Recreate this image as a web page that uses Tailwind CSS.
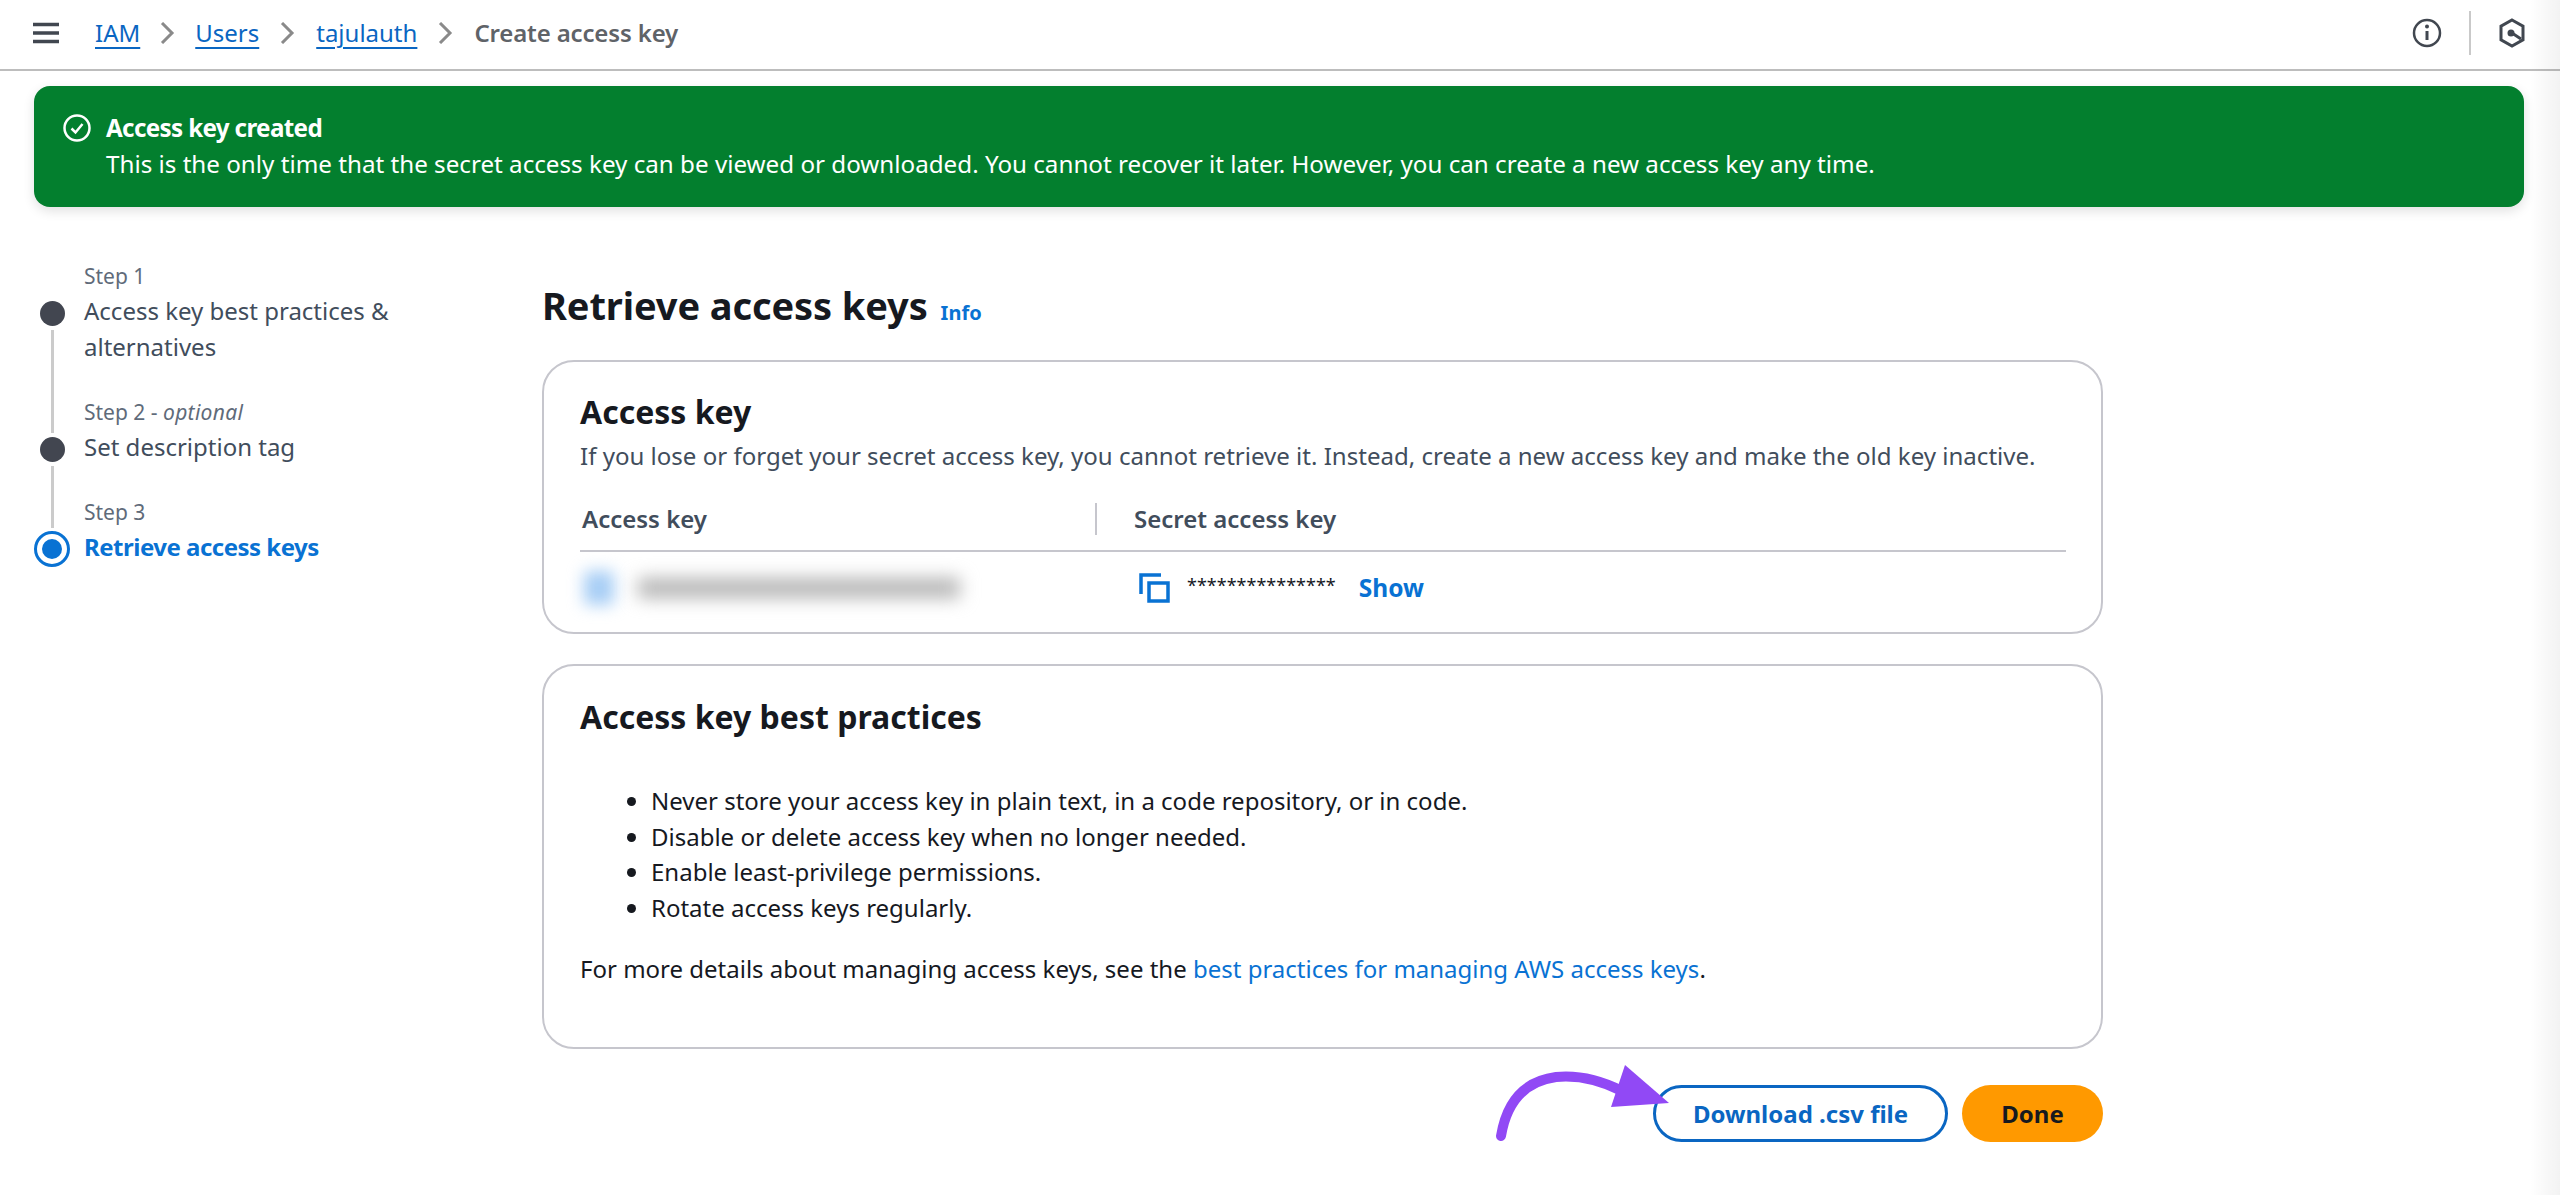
<!DOCTYPE html>
<html lang="en">
<head>
  <meta charset="UTF-8" />
  <title>Create access key</title>
  <script src="https://cdn.jsdelivr.net/npm/@tailwindcss/browser@4"></script>
</head>
<body class="relative h-[1195px] overflow-hidden bg-white font-['Noto_Sans',sans-serif] text-[24px] text-[#16191f]">

  <!-- top bar -->
  <header class="flex h-[71px] items-center border-b-2 border-[#bdbdbd] pb-[4px] pl-[33px] pr-[34px]">
    <svg class="h-[22px] w-[26px]" viewBox="0 0 26 22"><path d="M0 2.5h26M0 11h26M0 19.5h26" stroke="#414750" stroke-width="3.5" /></svg>
    <nav class="ml-[36px] flex items-center text-[24px] leading-[36px] text-[#0a66c2]">
      <a class="underline decoration-2 underline-offset-[5px]">IAM</a>
      <svg class="mx-[20px] h-[22px] w-[15px]" viewBox="0 0 15 22"><path d="M2 1l10 10L2 21" fill="none" stroke="#8a8a8a" stroke-width="3" /></svg>
      <a class="underline decoration-2 underline-offset-[5px]">Users</a>
      <svg class="mx-[21px] h-[22px] w-[15px]" viewBox="0 0 15 22"><path d="M2 1l10 10L2 21" fill="none" stroke="#8a8a8a" stroke-width="3" /></svg>
      <a class="underline decoration-2 underline-offset-[5px]">tajulauth</a>
      <svg class="mx-[21px] h-[22px] w-[15px]" viewBox="0 0 15 22"><path d="M2 1l10 10L2 21" fill="none" stroke="#8a8a8a" stroke-width="3" /></svg>
      <span class="font-semibold tracking-[-0.15px] text-[#5f6368]">Create access key</span>
    </nav>
    <div class="ml-auto flex items-center">
      <svg class="h-[30px] w-[30px]" viewBox="0 0 30 30"><circle cx="15" cy="15" r="13" fill="none" stroke="#414750" stroke-width="2.5" /><path d="M15 13v9" stroke="#414750" stroke-width="3" /><circle cx="15" cy="8.5" r="2" fill="#414750" /></svg>
      <div class="ml-[27px] mr-[27px] h-[44px] w-[2px] bg-[#c9c9c9]"></div>
      <svg class="h-[30px] w-[28px]" viewBox="0 0 28 30"><path d="M14 2l11 6.2v13.6L14 28 3 21.8V8.200z" fill="none" stroke="#414750" stroke-width="3" /><circle cx="13" cy="15" r="3.500" fill="#414750" /><path d="M14 15l9 6" stroke="#414750" stroke-width="3" /></svg>
    </div>
  </header>

  <!-- success banner -->
  <div class="mx-[34px] mt-[15px] flex h-[121px] w-[2490px] rounded-[16px] bg-[#037f2e] pl-[29px] pt-[24px] text-white shadow-[0_4px_12px_rgba(0,0,0,0.12)]">
    <svg class="mt-[4px] h-[28px] w-[28px] shrink-0" viewBox="0 0 28 28"><circle cx="14" cy="14" r="12.500" fill="none" stroke="#fff" stroke-width="2.500" /><path d="M8.500 14.500l4 4 7-8.500" fill="none" stroke="#fff" stroke-width="2.500" /></svg>
    <div class="ml-[15px] text-[24.2px] leading-[36px]">
      <div class="font-bold tracking-[-0.65px]">Access key created</div>
      <div>This is the only time that the secret access key can be viewed or downloaded. You cannot recover it later. However, you can create a new access key any time.</div>
    </div>
  </div>

  <div class="flex">
    <!-- wizard steps -->
    <aside class="w-[542px] shrink-0 pl-[34px] pt-[54px]">
      <ol>
        <li class="flex h-[119px]">
          <div class="flex w-[36px] flex-col items-center pt-[40px]">
            <span class="h-[25px] w-[25px] shrink-0 rounded-full bg-[#424650]"></span>
            <span class="mt-[4px] h-[103px] w-[3px] shrink-0 bg-[#cbcbcb]"></span>
          </div>
          <div class="ml-[14px]">
            <div class="text-[21px] leading-[30px] text-[#5f6b7a]">Step 1</div>
            <div class="mt-[2px] w-[340px] leading-[36px] text-[#414d5c]">Access key best practices &amp; alternatives</div>
          </div>
        </li>
        <li class="mt-[17px] flex h-[100px]">
          <div class="flex w-[36px] flex-col items-center pt-[40px]">
            <span class="h-[25px] w-[25px] shrink-0 rounded-full bg-[#424650]"></span>
            <span class="mt-[4px] h-[62px] w-[3px] shrink-0 bg-[#cbcbcb]"></span>
          </div>
          <div class="ml-[14px]">
            <div class="text-[21px] leading-[30px] text-[#5f6b7a]">Step 2 - <i class="tracking-[0.3px]">optional</i></div>
            <div class="mt-[2px] leading-[36px] text-[#414d5c]">Set description tag</div>
          </div>
        </li>
        <li class="flex">
          <div class="flex w-[36px] flex-col items-center pt-[34px]">
            <span class="flex h-[36px] w-[36px] items-center justify-center rounded-full border-[3px] border-[#0972d3]"><span class="h-[20px] w-[20px] rounded-full bg-[#0972d3]"></span></span>
          </div>
          <div class="ml-[14px]">
            <div class="text-[21px] leading-[30px] text-[#5f6b7a]">Step 3</div>
            <div class="mt-[2px] font-bold tracking-[-0.5px] leading-[36px] text-[#0972d3]">Retrieve access keys</div>
          </div>
        </li>
      </ol>
    </aside>

    <!-- main column -->
    <main class="w-[1561px] pt-[73px]">
      <div class="flex items-baseline">
        <h1 class="text-[38px] font-bold tracking-[-0.1px] leading-[50px]">Retrieve access keys</h1>
        <a class="ml-[13px] text-[20px] font-bold text-[#0972d3]">Info</a>
      </div>

      <section class="mt-[30px] h-[274px] rounded-[32px] border-2 border-[#c6c6cd] px-[36px] pt-[30px]">
        <h2 class="text-[32px] font-bold leading-[40px]">Access key</h2>
        <p class="mt-[6px] text-[24.05px] leading-[36px] text-[#414d5c]">If you lose or forget your secret access key, you cannot retrieve it. Instead, create a new access key and make the old key inactive.</p>
        <div class="mr-[-1px] mt-[26px] flex h-[52px] items-start border-b-2 border-[#c6c6cd] pb-[16px] font-semibold leading-[32px] text-[#414d5c]">
          <div class="w-[515px] pl-[2px] pt-[3px]">Access key</div>
          <div class="mt-[3px] h-[32px] w-[2px] bg-[#c6c6cd]"></div>
          <div class="pl-[37px] pt-[3px]">Secret access key</div>
        </div>
        <div class="flex h-[70px] items-center pt-[2px]">
          <div class="ml-[4px] h-[34px] w-[30px] rounded bg-[#a6cdf5] blur-[8px]"></div>
          <div class="ml-[24px] h-[20px] w-[322px] bg-[#b4b4b4] blur-[9px]"></div>
          <svg class="ml-[179px] h-[30px] w-[31px]" viewBox="0 0 31 30"><path d="M2 21V2h20" fill="none" stroke="#0972d3" stroke-width="3.500" /><rect x="10" y="10" width="19" height="18" fill="none" stroke="#0972d3" stroke-width="3.500" /></svg>
          <span class="ml-[17px] mt-[-6px] text-[18px] text-[#16191f]">***************</span>
          <a class="ml-[23px] text-[24.5px] font-bold text-[#0972d3]">Show</a>
        </div>
      </section>

      <section class="mt-[30px] h-[385px] rounded-[32px] border-2 border-[#c6c6cd] px-[36px] pt-[31px]">
        <h2 class="text-[32px] font-bold leading-[40px]">Access key best practices</h2>
        <ul class="ml-[71px] mt-[46px] list-disc leading-[35.500px] text-[#16191f]">
          <li>Never store your access key in plain text, in a code repository, or in code.</li>
          <li>Disable or delete access key when no longer needed.</li>
          <li>Enable least-privilege permissions.</li>
          <li>Rotate access keys regularly.</li>
        </ul>
        <p class="mt-[26px] leading-[36px]">For more details about managing access keys, see the <a class="text-[#0972d3]">best practices for managing AWS access keys</a>.</p>
      </section>

      <div class="mt-[36px] flex justify-end">
        <button class="h-[57px] w-[295px] rounded-full border-[3px] border-[#0a66c2] font-bold text-[#0a66c2]">Download .csv file</button>
        <button class="ml-[14px] h-[57px] w-[141px] rounded-full bg-[#ff9900] font-bold text-[#16191f]">Done</button>
      </div>
    </main>
  </div>

  <!-- purple annotation arrow -->
  <svg class="absolute left-[1490px] top-[1060px] h-[90px] w-[190px]" viewBox="0 0 190 90">
    <path d="M11 76C17 40 36 21 66 17c20-2 42 2 66 14" fill="none" stroke="#9149f5" stroke-width="10" stroke-linecap="round" />
    <path d="M135 5l44 38-58 4z" fill="#9149f5" />
  </svg>

  <!-- soft shade along the right edge of the capture -->
  <div class="pointer-events-none absolute inset-y-0 right-0 w-[30px] bg-linear-to-r from-transparent to-black/5"></div>

</body>
</html>
